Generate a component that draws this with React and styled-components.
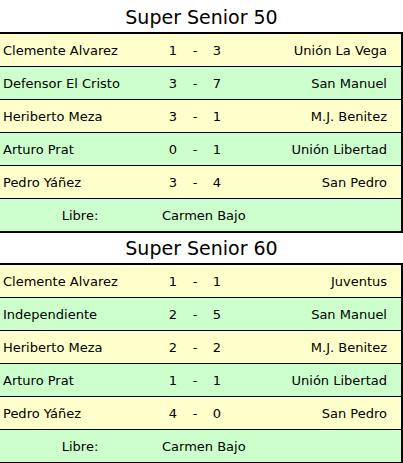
import React from "react";
import styled, { createGlobalStyle } from "styled-components";

const Global = createGlobalStyle`
  html, body { margin: 0; padding: 0; background: #ffffff; }
  body { font-family: "DejaVu Sans", Verdana, sans-serif; color: #000; }
`;

const Page = styled.div`
  width: 403px;
  padding-top: 2px;
  overflow: hidden;
`;

const Title = styled.div`
  height: 30px;
  line-height: 30px;
  text-align: center;
  font-size: 19px;
  color: #000;
`;

const Table = styled.div`
  border-top: 2px solid #000;
  border-right: 2px solid #000;
  border-bottom: 2px solid #000;
  display: flex;
  flex-direction: column;
`;

const Row = styled.div`
  display: grid;
  grid-template-columns: 160px 26px 18px 26px 1fr;
  align-items: center;
  height: 32px;
  background: ${(p) => (p.$green ? "#ccffcc" : "#ffffcc")};
  font-size: 13px;
  & + & { border-top: 1px solid #000; }
`;

const Name = styled.div`
  padding-left: 3px;
  white-space: nowrap;
`;

const Score = styled.div`
  text-align: center;
`;

const Away = styled.div`
  text-align: right;
  padding-right: 14px;
  white-space: nowrap;
`;

const LibreLabel = styled.div`
  text-align: center;
`;

const LibreTeam = styled.div`
  grid-column: 2 / 6;
  padding-left: 2px;
`;

const data = [
  {
    title: "Super Senior 50",
    matches: [
      ["Clemente Alvarez", "1", "3", "Unión La Vega"],
      ["Defensor El Cristo", "3", "7", "San Manuel"],
      ["Heriberto Meza", "3", "1", "M.J. Benitez"],
      ["Arturo Prat", "0", "1", "Unión Libertad"],
      ["Pedro Yáñez", "3", "4", "San Pedro"],
    ],
    libre: "Carmen Bajo",
  },
  {
    title: "Super Senior 60",
    matches: [
      ["Clemente Alvarez", "1", "1", "Juventus"],
      ["Independiente", "2", "5", "San Manuel"],
      ["Heriberto Meza", "2", "2", "M.J. Benitez"],
      ["Arturo Prat", "1", "1", "Unión Libertad"],
      ["Pedro Yáñez", "4", "0", "San Pedro"],
    ],
    libre: "Carmen Bajo",
  },
];

export default function App() {
  return (
    <Page>
      <Global />
      {data.map((g) => (
        <React.Fragment key={g.title}>
          <Title>{g.title}</Title>
          <Table>
            {g.matches.map((m, i) => (
              <Row key={i} $green={i % 2 === 1}>
                <Name>{m[0]}</Name>
                <Score>{m[1]}</Score>
                <Score>-</Score>
                <Score>{m[2]}</Score>
                <Away>{m[3]}</Away>
              </Row>
            ))}
            <Row $green>
              <LibreLabel>Libre:</LibreLabel>
              <LibreTeam>{g.libre}</LibreTeam>
            </Row>
          </Table>
        </React.Fragment>
      ))}
    </Page>
  );
}
